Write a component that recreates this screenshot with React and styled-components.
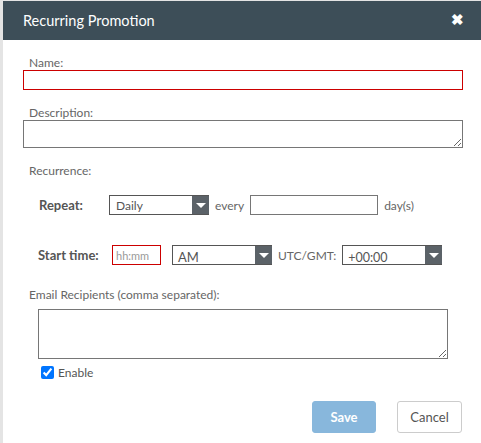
import styled, { createGlobalStyle } from 'styled-components';

const GlobalStyle = createGlobalStyle`
  html, body {
    margin: 0;
    padding: 0;
    background: #e4e4e4;
  }
  body {
    font-family: Lato, 'Open Sans', sans-serif;
  }
`;

const Page = styled.div`
  display: flex;
  width: 481px;
  height: 443px;
  padding: 1px 0 0 3px;
  box-sizing: border-box;
  overflow: hidden;
`;

const Dialog = styled.div`
  flex: 1;
  display: flex;
  flex-direction: column;
  background: #fff;
`;

const Header = styled.div`
  height: 39px;
  flex-shrink: 0;
  display: flex;
  align-items: center;
  justify-content: space-between;
  background-color: #3d4e58;
  padding: 0 17px 0 20px;

  h1 {
    margin: 0;
    font-size: 14.5px;
    font-weight: 400;
    color: #fff;
  }
`;

const Close = styled.span`
  color: #fff;
  font-size: 15px;
  font-weight: 700;
  line-height: 1;
  cursor: pointer;
  margin-top: -2px;
`;

const Body = styled.div`
  display: flex;
  flex-direction: column;
  padding: 15px 18px 0 20px;
`;

const Label = styled.label`
  display: block;
  font-size: 12px;
  color: #666;
  padding-left: 6px;
  line-height: 15px;
  margin-top: ${(props) => props.top || 0}px;
`;

const TextInput = styled.input`
  box-sizing: border-box;
  height: 20px;
  width: ${(props) => (props.w ? `${props.w}px` : '100%')};
  border: 1px solid ${(props) => (props.invalid ? '#cc0000' : '#767676')};
  border-radius: 0;
  padding: 0 3px;
  font-family: inherit;
  font-size: 11px;
  outline: none;

  &::placeholder {
    color: #999;
  }
`;

const TextArea = styled.textarea`
  display: block;
  box-sizing: border-box;
  height: ${(props) => props.h}px;
  width: ${(props) => (props.w ? `${props.w}px` : '100%')};
  margin: ${(props) => props.top || 0}px 0 0 ${(props) => props.indent || 0}px;
  border: 1px solid #767676;
  border-radius: 0;
  font-family: inherit;
  outline: none;
`;

const Row = styled.div`
  display: flex;
  align-items: center;
  height: 20px;
  margin-top: ${(props) => props.top}px;
  padding-left: ${(props) => props.indent}px;
`;

const RowLabel = styled.span`
  font-size: 13px;
  font-weight: 700;
  color: #555;
  width: ${(props) => props.w}px;
`;

const Plain = styled.span`
  font-size: 12px;
  color: #666;
  margin: 0 6px;
`;

const Select = styled.div`
  box-sizing: border-box;
  display: flex;
  align-items: stretch;
  width: ${(props) => props.w}px;
  height: 20px;
  border: 1px solid #555;
  border-right: none;
  margin-left: ${(props) => props.gap || 0}px;
`;

const SelectValue = styled.span`
  flex: 1;
  font-size: ${(props) => props.size || 12}px;
  color: #555;
  padding: ${(props) => (props.size ? '3px 0 0 5px' : '1px 0 0 6px')};
  line-height: 17px;
`;

const Arrow = styled.span`
  width: 17px;
  background: #5b6268;
  display: flex;
  align-items: center;
  justify-content: center;

  &::after {
    content: '';
    border-left: 5px solid transparent;
    border-right: 5px solid transparent;
    border-top: 5px solid #fff;
    margin-top: 1px;
  }
`;

const CheckRow = styled.label`
  display: flex;
  align-items: center;
  gap: 4px;
  height: 16px;
  margin: 5px 0 0 18px;
  font-size: 12px;
  color: #555;

  input {
    margin: 0;
    width: 13px;
    height: 13px;
    accent-color: #0075ff;
  }
`;

const Footer = styled.div`
  display: flex;
  justify-content: flex-end;
  gap: 21px;
  padding: 21px 19px 0 0;
`;

const Button = styled.button`
  box-sizing: border-box;
  width: ${(props) => props.w}px;
  height: 32px;
  border-radius: 3px;
  font-family: inherit;
  font-size: 13px;
  cursor: pointer;
  background: ${(props) => (props.primary ? '#88b7dc' : '#fff')};
  color: ${(props) => (props.primary ? '#fff' : '#555')};
  font-weight: ${(props) => (props.primary ? 700 : 400)};
  border: 1px solid ${(props) => (props.primary ? '#88b7dc' : '#ccc')};
`;

export default function App() {
  return (
    <>
      <GlobalStyle />
      <Page>
        <Dialog>
          <Header>
            <h1>Recurring Promotion</h1>
            <Close>✖</Close>
          </Header>

          <Body>
            <Label>Name:</Label>
            <TextInput invalid />

            <Label top={15}>Description:</Label>
            <TextArea h={28} />

            <Label top={15}>Recurrence:</Label>

            <Row top={17} indent={16}>
              <RowLabel w={70}>Repeat:</RowLabel>
              <Select w={100}>
                <SelectValue>Daily</SelectValue>
                <Arrow />
              </Select>
              <Plain>every</Plain>
              <TextInput w={128} />
              <Plain>day(s)</Plain>
            </Row>

            <Row top={30} indent={15}>
              <RowLabel w={74}>Start time:</RowLabel>
              <TextInput w={49} invalid placeholder="hh:mm" />
              <Select w={100} gap={11}>
                <SelectValue size={13}>AM</SelectValue>
                <Arrow />
              </Select>
              <Plain>UTC/GMT:</Plain>
              <Select w={100}>
                <SelectValue size={12.5}>+00:00</SelectValue>
                <Arrow />
              </Select>
            </Row>

            <Label top={22}>Email Recipients (comma separated):</Label>
            <TextArea h={50} w={410} indent={15} top={7} />

            <CheckRow>
              <input type="checkbox" defaultChecked />
              Enable
            </CheckRow>
          </Body>

          <Footer>
            <Button primary w={64}>Save</Button>
            <Button w={65}>Cancel</Button>
          </Footer>
        </Dialog>
      </Page>
    </>
  );
}
